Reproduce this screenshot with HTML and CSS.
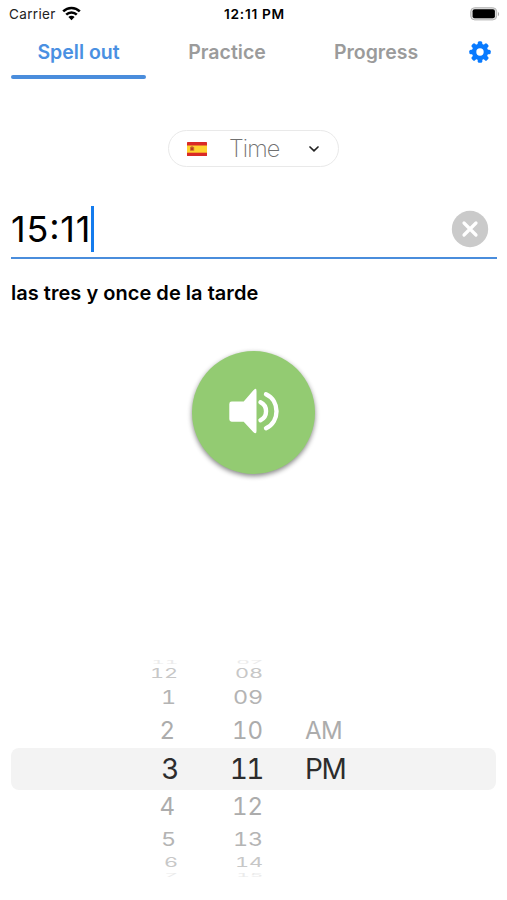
FILE: index.html
```html
<!DOCTYPE html>
<html lang="en">
<head>
<meta charset="utf-8">
<title>Spell out</title>
<link rel="stylesheet" href="styles.css">
</head>
<body>
<main class="screen">
  <header class="status">
    <div class="carrier"><span>Carrier</span>
      <svg width="19" height="15" viewBox="0 0 19 15"><g fill="none" stroke="#000" stroke-width="2.5"><path d="M1.2 5.4a11.7 11.7 0 0 1 16.6 0"/><path d="M4.2 8.6a7.5 7.5 0 0 1 10.6 0"/></g><path d="M6.4 11a4.4 4.4 0 0 1 6.2 0l-3.1 3.2z"/></svg>
    </div>
    <span class="clock">12:11 PM</span>
    <svg class="battery" width="31" height="14" viewBox="0 0 31 14"><rect x="1.7" y=".7" width="26" height="12.2" rx="4" fill="#ddd" stroke="#b5b5b5"/><rect x="3.6" y="2.3" width="22.3" height="9" rx="2"/><path d="M29 4.7q2.3 2.3 0 4.6z" fill="#aaa"/></svg>
  </header>
  <nav class="tabs">
    <a class="tab active">Spell out</a>
    <a class="tab">Practice</a>
    <a class="tab">Progress</a>
    <svg class="gear" width="22" height="22" viewBox="-11 -11 22 22"><g fill="#087aff"><g id="teeth"><rect x="-2.3" y="-10.7" width="4.6" height="21.4" rx="1.5"/><rect x="-10.7" y="-2.3" width="21.4" height="4.6" rx="1.5"/></g><use href="#teeth" transform="rotate(45)"/><circle r="8.2"/></g><circle r="3.7" fill="#fff"/></svg>
  </nav>
  <div class="picker">
    <svg width="20" height="14" viewBox="0 0 20 14"><rect width="20" height="14" rx=".6" fill="#d92a26"/><rect y="3.5" width="20" height="7.2" fill="#ffd22e"/><path d="M3 5.3l2-1.2 2.2 1.2v3.5H3z" fill="#cf7428"/><path d="M4 5.6h2.2v2.5H4z" fill="#b63f22"/></svg>
    <span class="kind">Time</span>
    <svg width="12" height="8" viewBox="0 0 12 8"><path d="M2 2l4 3.8L10 2" fill="none" stroke="#222" stroke-width="1.7" stroke-linecap="round"/></svg>
  </div>
  <section class="field">
    <span class="value">15<span class="colon">:</span>11</span><i class="caret"></i>
    <svg class="clear" width="38" height="38" viewBox="-19 -19 38 38"><circle r="18.2" fill="#cacaca"/><path d="M-6-6L6 6M6-6L-6 6" stroke="#fff" stroke-width="3.2" stroke-linecap="round"/></svg>
  </section>
  <p class="words">las tres y once de la tarde</p>
  <button class="speak" aria-label="Speak"><svg width="52" height="48" viewBox="0 0 52 48"><path d="M3.7 14.5h12L25.2 3.4Q28.5 0 28.5 4v40q0 4-3.3 1L15.7 34.7h-12q-2.4 0-2.4-2.4V16.9q0-2.4 2.4-2.4z" fill="#fff"/><g fill="none" stroke="#fff" stroke-width="4.4" stroke-linecap="round"><path d="M32.5 15.2c7.4 3.6 7.4 14.4 0 18"/><path d="M38 7.2c14 6.4 14 27.6 0 34"/></g></svg></button>
  <section class="wheel">
    <div class="row edge"><span class="h">11</span><span class="m">07</span></div>
    <div class="row far"><span class="h">12</span><span class="m">08</span></div>
    <div class="row mid"><span class="h">1</span><span class="m">09</span></div>
    <div class="row near"><span class="h">2</span><span class="m">10</span><span class="p">AM</span></div>
    <div class="row selected"><span class="h">3</span><span class="m">11</span><span class="p">PM</span></div>
    <div class="row near"><span class="h">4</span><span class="m">12</span></div>
    <div class="row mid"><span class="h">5</span><span class="m">13</span></div>
    <div class="row far"><span class="h">6</span><span class="m">14</span></div>
    <div class="row edge"><span class="h">7</span><span class="m">15</span></div>
  </section>
</main>
</body>
</html>
```
FILE: styles.css
```css
* { box-sizing: border-box; }
body { margin: 0; background: #fff; color: #000; font-family: Inter, "Liberation Sans", sans-serif; }
svg { display: block; flex: none; }
.screen { width: 507px; height: 900px; overflow: hidden; display: flex; flex-direction: column; }
.status { flex: none; height: 27px; padding: 0 7px 0 9px; display: grid; grid-template-columns: 1fr auto 1fr; align-items: center; font-size: 13.5px; }
.carrier { display: flex; align-items: center; gap: 6px; color: #222; letter-spacing: .35px; }
.clock { font-weight: 600; font-size: 13.7px; letter-spacing: .7px; }
.battery { justify-self: end; }
.tabs { flex: none; height: 52px; padding: 0 16px 0 11px; display: grid; grid-template-columns: 135px 136px 136px 1fr; column-gap: 13px; align-items: stretch; }
.tab { display: flex; justify-content: center; align-items: center; border-bottom: 3px solid transparent; color: #9b9b9b; font-size: 19.5px; font-weight: 600; white-space: nowrap; }
.tab.active { color: #4a90e2; position: relative; }
.tab.active::after { content: ""; position: absolute; left: 0; right: 0; bottom: -3px; height: 4px; border-radius: 2px; background: #4a8ddc; }
.gear { align-self: center; justify-self: end; margin-bottom: 2px; }
.picker { flex: none; width: 171px; height: 37px; margin: 51px 0 0 168px; border: 1px solid #e9e9e9; border-radius: 19px; display: flex; align-items: center; padding: 0 18px; }
.kind { flex: 1; margin-left: 22px; color: #707070; font-size: 23.5px; font-weight: 200; letter-spacing: -.9px; }
.field { flex: none; height: 54px; margin: 38px 10px 0 11px; border-bottom: 2px solid #4a8ddc; display: flex; align-items: center; padding-bottom: 5px; }
.value { font-size: 36px; letter-spacing: .8px; }
.colon { display: inline-block; transform: translateY(-3px); }
.caret { width: 2.6px; height: 46px; background: #147bed; }
.clear { margin: 0 8px 0 auto; }
.words { margin: 21px 0 0 11px; font-size: 20px; line-height: 26px; font-weight: 600; letter-spacing: .03px; white-space: nowrap; }
.speak { flex: none; width: 123px; height: 123px; margin: 45px 0 0 192px; padding: 0 0 3px; border: 0; border-radius: 50%; background: #93cb72; box-shadow: 0 2px 5px rgba(0,0,0,.48); display: flex; align-items: center; justify-content: center; }
.wheel { flex: none; margin: 186px 11px 0; height: 218px; overflow: hidden; color: #acacac; font-size: 24px; font-feature-settings: "tnum"; }
.row { height: 38px; display: grid; grid-template: 100% / 167px 85px 1fr; align-items: center; line-height: 1; white-space: nowrap; }
.h, .m { justify-self: end; transform-origin: right center; }
.p { margin-left: 42px; }
.near .h { margin-right: 3px; }
.near .p { letter-spacing: -.5px; }
.selected { height: 42px; margin: -2px 0; border-radius: 8px; background: #f3f3f3; color: #2c2c2c; font-size: 28px; letter-spacing: -1.5px; }
/* Rows flatten towards the edges of the drum. */
.mid { height: 28px; color: #b4b4b4; font-size: 18.7px; }
.mid .h { margin-right: 2px; }
.mid span { transform: scaleX(1.25); }
.far { height: 19px; color: #c7c7c7; font-size: 12.4px; }
.far span { transform: scaleX(1.75); }
.edge { height: 5px; color: #ebebeb; font-size: 5px; }
.edge span { transform: scaleX(4.2); }
```
